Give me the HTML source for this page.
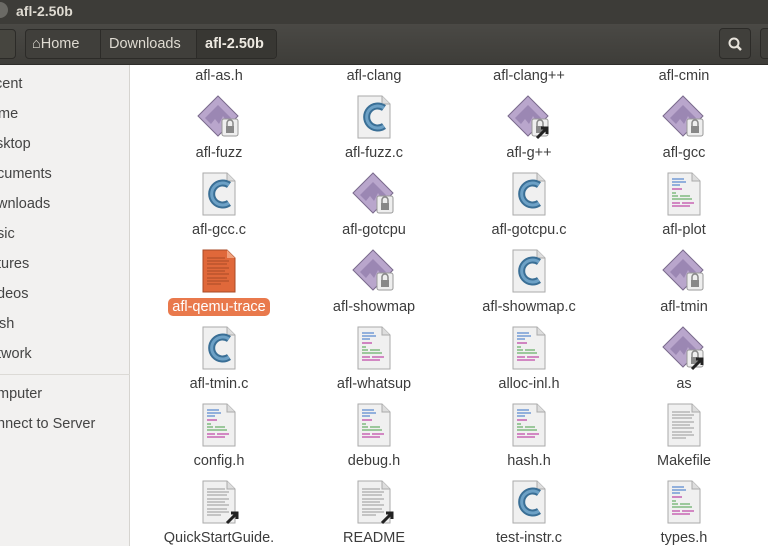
<!DOCTYPE html>
<html><head><meta charset="utf-8"><style>
*{margin:0;padding:0;box-sizing:border-box}
body{width:768px;height:546px;overflow:hidden;background:#fff;font-family:"Liberation Sans","DejaVu Sans",sans-serif;position:relative}
#title{position:absolute;left:0;top:0;width:768px;height:24px;background:#3d3c38;color:#dfdbd2;font-weight:bold;font-size:14px}
#tb{position:absolute;left:0;top:24px;width:768px;height:41px;background:linear-gradient(#4a4945,#3e3d39);border-bottom:1px solid #2e2d2a}
.btn{position:absolute;border:1px solid #2c2b28;border-radius:4px;background:#46453f;color:#dfdbd2;font-size:14px}
#side{position:absolute;left:0;top:65px;width:130px;height:481px;background:#f2f1f0;border-right:1px solid #d6d4d0}
.si{position:absolute;font-size:14.5px;color:#444;white-space:nowrap}
.it{position:absolute;width:150px;text-align:center;font-size:14.5px;color:#3c3c3c}
.ic{position:absolute;width:44px;height:48px}
.sel{background:#e9794c;color:#fff;border-radius:5px;padding:1px 4px}
</style></head><body>
<svg width="0" height="0" style="position:absolute">
<defs>
<g id="exec"><path d="M1 22 L21 2 L41 22 L21 42Z" fill="#b9a6cc" stroke="#7a6a8c"/><path d="M8 24 L21 11 L34 24 L30 28 L26 22 L22 30 L18 25 L14 30Z" fill="#8f7aa8" opacity=".7"/><rect x="25" y="25" width="16" height="17" rx="2" fill="#eee" stroke="#999"/><rect x="29" y="32" width="8" height="7" fill="#888"/><path d="M30 32 v-3 a3 3 0 0 1 6 0 v3" fill="none" stroke="#888" stroke-width="1.5"/></g>
<g id="page"><path d="M6 2 H30 L38 10 V44 H6Z" fill="#f0f0f0" stroke="#aaa"/><path d="M30 2 V10 H38" fill="#ddd" stroke="#aaa"/></g>
<g id="cf"><use href="#page"/><path d="M32 14 A11 11 0 1 0 32 32" fill="none" stroke="#3a6f96" stroke-width="7"/><path d="M32 14 A11 11 0 1 0 32 32" fill="none" stroke="#6da1c6" stroke-width="3"/></g>
<g id="hf"><use href="#page"/><g stroke-width="1.3"><path d="M10 8h12M10 11h14M10 14h8" stroke="#5a8ad0"/><path d="M10 18h10" stroke="#c04aa8"/><path d="M10 22h4M10 25h6M18 25h10M10 28h8M18 28h12" stroke="#6ab06a"/><path d="M10 32h8M20 32h12M10 35h18" stroke="#c04aa8"/></g></g>
<g id="df"><use href="#page"/><g stroke="#999" stroke-width="1"><path d="M10 10h18M10 13h22M10 16h20M10 20h22M10 23h18M10 26h22M10 30h20M10 33h22M10 36h14"/></g></g>
<g id="of"><path d="M6 2 H30 L38 10 V44 H6Z" fill="#e0683a" stroke="#a84a25"/><path d="M30 2 V10 H38" fill="#f0a07c"/><g stroke="#a84a25" stroke-width="1"><path d="M10 10h18M10 13h22M10 16h20M10 20h22M10 23h18M10 26h22M10 30h20M10 33h22M10 36h14"/></g></g>
<g id="lk"><path d="M30 44 L40 34 M34 34 H40 V40" stroke="#222" stroke-width="3" fill="none"/></g>
</defs></svg>

<div id="title"><div style="position:absolute;left:-8px;top:2px;width:16px;height:16px;border-radius:8px;background:#6b6a65"></div><span style="position:absolute;left:16px;top:3px">afl-2.50b</span></div>
<div id="tb">
<div class="btn" style="left:-6px;top:5px;width:22px;height:30px"></div>
<div class="btn" style="left:25px;top:5px;width:252px;height:30px;background:#403f3b"></div>
<div style="position:absolute;left:100px;top:6px;width:1px;height:28px;background:#2c2b28"></div>
<div style="position:absolute;left:196px;top:6px;width:1px;height:28px;background:#2c2b28"></div>
<div style="position:absolute;left:197px;top:6px;width:79px;height:28px;background:#383733;border-radius:0 4px 4px 0"></div>
<span style="position:absolute;left:32px;top:12px;color:#dfdbd2;font-size:14.5px">⌂Home</span>
<span style="position:absolute;left:109px;top:12px;color:#dfdbd2;font-size:14.5px">Downloads</span>
<span style="position:absolute;left:205px;top:12px;color:#eeeae2;font-size:14.5px;font-weight:bold">afl-2.50b</span>
<div class="btn" style="left:719px;top:4px;width:32px;height:31px;background:#403f3b"><svg width="32" height="31"><circle cx="14" cy="14" r="4.5" fill="none" stroke="#e8e4dc" stroke-width="2"/><path d="M17 17 L21 21" stroke="#e8e4dc" stroke-width="2.5"/></svg></div>
<div class="btn" style="left:760px;top:4px;width:20px;height:31px;background:#403f3b"></div>
</div>

<div id="side">
<div class="si" style="left:-5px;top:11px">cent</div>
<div class="si" style="left:-2px;top:41px">me</div>
<div class="si" style="left:-4px;top:71px">sktop</div>
<div class="si" style="left:-3px;top:101px">cuments</div>
<div class="si" style="left:-3px;top:131px">wnloads</div>
<div class="si" style="left:-3px;top:161px">sic</div>
<div class="si" style="left:-3px;top:191px">tures</div>
<div class="si" style="left:-3px;top:221px">deos</div>
<div class="si" style="left:-1px;top:251px">sh</div>
<div class="si" style="left:-3px;top:281px">twork</div>
<div style="position:absolute;left:0;top:309px;width:130px;height:1px;background:#dcdad6"></div>
<div class="si" style="left:-3px;top:321px">mputer</div>
<div class="si" style="left:-3px;top:351px">nnect to Server</div>
</div>

<div id="grid"></div>
<script>
var cols=[219,374,529,684];
var rows=[
[["afl-as.h"],["afl-clang"],["afl-clang++"],["afl-cmin"]],
[["afl-fuzz","exec"],["afl-fuzz.c","cf"],["afl-g++","exec",1],["afl-gcc","exec"]],
[["afl-gcc.c","cf"],["afl-gotcpu","exec"],["afl-gotcpu.c","cf"],["afl-plot","hf"]],
[["afl-qemu-trace","of",0,1],["afl-showmap","exec"],["afl-showmap.c","cf"],["afl-tmin","exec"]],
[["afl-tmin.c","cf"],["afl-whatsup","hf"],["alloc-inl.h","hf"],["as","exec",1]],
[["config.h","hf"],["debug.h","hf"],["hash.h","hf"],["Makefile","df"]],
[["QuickStartGuide.","df",1],["README","df",1],["test-instr.c","cf"],["types.h","hf"]]];
var h="";
rows.forEach(function(r,ri){var ly=67+ri*77;r.forEach(function(c,ci){var x=cols[ci];
if(c[1])h+='<svg class="ic" style="left:'+(x-22)+'px;top:'+(ly-50)+'px" viewBox="0 0 44 48"><use href="#'+c[1]+'"/>'+(c[2]?'<use href="#lk"/>':'')+'</svg>';
h+='<div class="it" style="left:'+(x-75)+'px;top:'+(ly+1)+'px">'+(c[3]?'<span class="sel">'+c[0]+'</span>':c[0])+'</div>';});});
document.getElementById("grid").innerHTML=h;
</script>
</body></html>
